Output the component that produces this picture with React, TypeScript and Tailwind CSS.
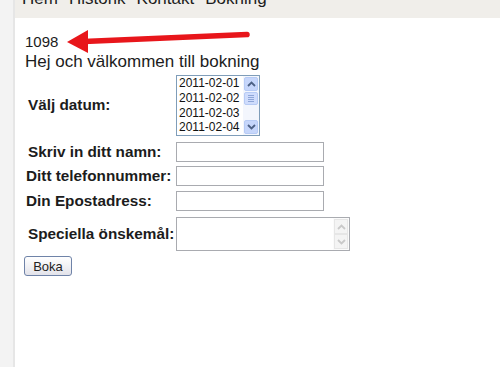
import React from "react";

const Chevron = ({ up, color }: { up?: boolean; color: string }) => (
  <svg width="9" height="6" viewBox="0 0 9 6">
    <path
      d={up ? "M1 5 L4.5 1.5 L8 5" : "M1 1 L4.5 4.5 L8 1"}
      fill="none"
      stroke={color}
      strokeWidth="1.8"
    />
  </svg>
);

export default function App() {
  const dates = ["2011-02-01", "2011-02-02", "2011-02-03", "2011-02-04"];
  return (
    <div className="w-[500px] h-[367px] flex bg-white overflow-hidden font-['Liberation_Sans',Arial,sans-serif] text-[#1c1c1c]">
      <div className="w-[15px] shrink-0 bg-[#f3f3f3] border-r-2 border-[#e6e6e6]" />
      <div className="flex-1 flex flex-col relative">
        <div className="h-[18px] shrink-0 bg-[#f0eeea] overflow-hidden pl-[7px]">
          <div className="flex gap-[11px] text-[17px] leading-[17px] -mt-[10px] text-[#1c1c1c]">
            <span>Hem</span>
            <span>Historik</span>
            <span>Kontakt</span>
            <span>Bokning</span>
          </div>
        </div>

        <div className="pl-[10px] flex flex-col">
          <div className="mt-[15px] text-[15px] leading-[17px]">1098</div>
          <div className="mt-[2px] text-[17px] leading-[19px]">Hej och välkommen till bokning</div>

          <div className="mt-[4px] flex flex-col font-bold text-[15.3px]">
            <div className="flex items-center h-[61px]">
              <div className="w-[151px] pl-[3px]">Välj datum:</div>
              <div className="w-[84px] h-[61px] border border-[#7f9db9] flex bg-white">
                <div className="flex-1 flex flex-col pl-[2px] font-normal text-[12px] leading-[14.75px] text-[#111]">
                  {dates.map((d) => (
                    <div key={d}>{d}</div>
                  ))}
                </div>
                <div className="w-[16px] flex flex-col bg-[#f3f6fd] p-px">
                  <div className="h-[14px] rounded-[2px] border border-[#b7cbf5] bg-[#c6d6fb] flex items-center justify-center">
                    <Chevron up color="#4d6185" />
                  </div>
                  <div className="h-[13px] mt-px rounded-[2px] border border-[#b7cbf5] bg-[#cfdcfc] flex flex-col items-center justify-center gap-[1px]">
                    <div className="w-[6px] h-px bg-[#8ea6d8]" />
                    <div className="w-[6px] h-px bg-[#8ea6d8]" />
                    <div className="w-[6px] h-px bg-[#8ea6d8]" />
                    <div className="w-[6px] h-px bg-[#8ea6d8]" />
                  </div>
                  <div className="flex-1" />
                  <div className="h-[14px] rounded-[2px] border border-[#b7cbf5] bg-[#c6d6fb] flex items-center justify-center">
                    <Chevron color="#4d6185" />
                  </div>
                </div>
              </div>
            </div>

            <div className="flex items-center h-[20px] mt-[6px]">
              <div className="w-[151px] pl-[3px]">Skriv in ditt namn:</div>
              <div className="w-[148px] h-[20px] border border-[#a9abb0] bg-white" />
            </div>
            <div className="flex items-center h-[20px] mt-[4px]">
              <div className="w-[151px] pl-px">Ditt telefonnummer:</div>
              <div className="w-[148px] h-[20px] border border-[#a9abb0] bg-white" />
            </div>
            <div className="flex items-center h-[20px] mt-[5px]">
              <div className="w-[151px] pl-px">Din Epostadress:</div>
              <div className="w-[148px] h-[20px] border border-[#a9abb0] bg-white" />
            </div>
            <div className="flex items-center h-[34px] mt-[6px]">
              <div className="w-[151px] pl-[3px]">Speciella önskemål:</div>
              <div className="w-[174px] h-[34px] border border-[#a9abb0] bg-white flex justify-end">
                <div className="w-[16px] flex flex-col justify-between bg-[#fbfbfb] p-px">
                  <div className="h-[15px] border border-[#e6e6e6] bg-[#f4f4f4] flex items-center justify-center">
                    <Chevron up color="#c9c9c9" />
                  </div>
                  <div className="h-[15px] border border-[#e6e6e6] bg-[#f4f4f4] flex items-center justify-center">
                    <Chevron color="#c9c9c9" />
                  </div>
                </div>
              </div>
            </div>
          </div>

          <div className="mt-[5px] -ml-px flex">
            <button className="w-[48px] h-[20px] rounded-[3px] border border-[#6f83a8] bg-gradient-to-b from-white to-[#e3e3ea] text-[13px] leading-none text-[#222] font-['Liberation_Sans',Arial,sans-serif]">
              Boka
            </button>
          </div>
        </div>

        <svg
          className="absolute left-0 top-0 pointer-events-none"
          width="485"
          height="367"
          viewBox="15 0 485 367"
        >
          <line x1="84" y1="41.5" x2="247" y2="34.5" stroke="#e8161b" strokeWidth="5.5" strokeLinecap="round" />
          <polygon points="67,42 88,30 88,53" fill="#e8161b" />
        </svg>
      </div>
    </div>
  );
}
